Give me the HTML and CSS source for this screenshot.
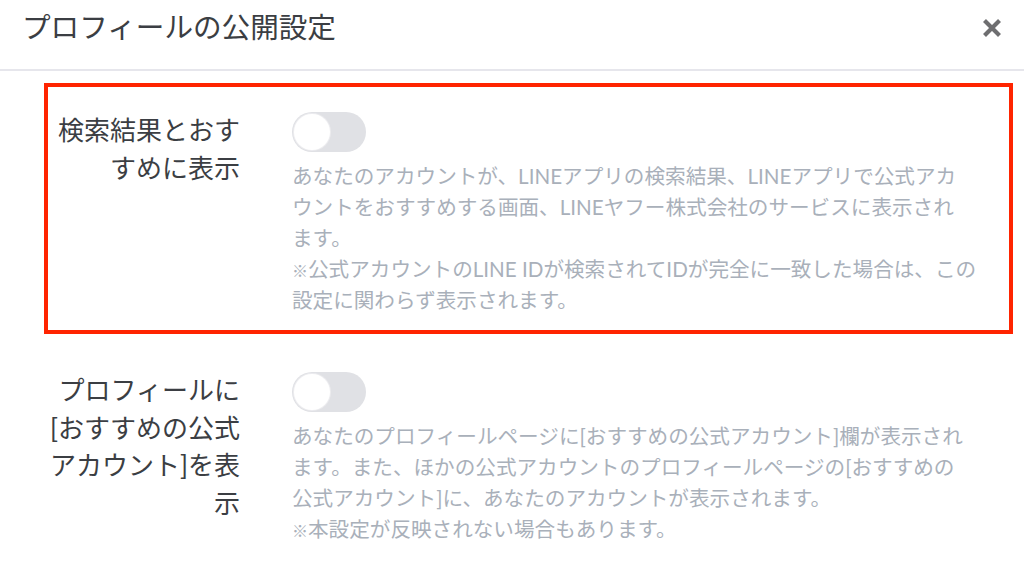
FILE: index.html
```html
<!DOCTYPE html>
<html lang="ja">
<head>
<meta charset="utf-8">
<title>プロフィールの公開設定</title>
<link rel="stylesheet" href="styles.css">
</head>
<body>
<div class="dialog">
  <header class="dialog-header">
    <h1 class="dialog-title">プロフィールの公開設定</h1>
    <button class="close-btn" aria-label="閉じる">
      <svg width="20" height="20" viewBox="0 0 20 20"><path d="M2.5 2.5 L17.5 17.5 M17.5 2.5 L2.5 17.5" stroke="#6e6e70" stroke-width="4.2" stroke-linecap="butt" fill="none"/></svg>
    </button>
  </header>
  <main class="settings">
    <section class="setting-row highlighted">
      <div class="setting-label">検索結果とおすすめに表示</div>
      <div class="setting-body">
        <div class="toggle"><span class="knob"></span></div>
        <p class="setting-desc">あなたのアカウントが、LINEアプリの検索結果、LINEアプリで公式アカウントをおすすめする画面、LINEヤフー株式会社のサービスに表示されます。</p>
        <p class="setting-note"><span class="note-mark">※</span>公式アカウントのLINE IDが検索されてIDが完全に一致した場合は、この設定に関わらず表示されます。</p>
      </div>
    </section>
    <section class="setting-row">
      <div class="setting-label">プロフィールに[おすすめの公式アカウント]を表示</div>
      <div class="setting-body">
        <div class="toggle"><span class="knob"></span></div>
        <p class="setting-desc">あなたのプロフィールページに[おすすめの公式アカウント]欄が表示されます。また、ほかの公式アカウントのプロフィールページの[おすすめの公式アカウント]に、あなたのアカウントが表示されます。</p>
        <p class="setting-note"><span class="note-mark">※</span>本設定が反映されない場合もあります。</p>
      </div>
    </section>
  </main>
</div>
</body>
</html>
```
FILE: styles.css
```css
* { box-sizing: border-box; }
html, body { margin: 0; padding: 0; background: #ffffff; }
body {
  font-family: "Lato", "Noto Sans CJK JP", sans-serif;
  color: #3b3e43;
  overflow: hidden;
}
.dialog { width: 1024px; height: 581px; }
.dialog-header {
  height: 71px;
  display: flex;
  align-items: flex-start;
  justify-content: space-between;
  padding: 7px 22px 0 22px;
  border-bottom: 2px solid #e6e6ec;
}
.dialog-title {
  margin: 0;
  font-size: 28.6px;
  font-weight: 400;
  line-height: 40px;
  color: #3b3e43;
}
.close-btn {
  margin-top: 11px;
  width: 20px;
  height: 20px;
  padding: 0;
  border: 0;
  background: none;
  display: flex;
}
.settings {
  padding: 12px 11px 0 44px;
  display: flex;
  flex-direction: column;
  gap: 9px;
}
.setting-row {
  display: flex;
  border: 4px solid transparent;
  padding: 25px 0 14px 0;
}
.setting-row.highlighted { border-color: #ff2400; }
.setting-label {
  width: 192px;
  flex: none;
  text-align: right;
  font-size: 26px;
  line-height: 37.5px;
  color: #3b3e43;
}
.setting-body {
  margin-left: 52px;
  display: flex;
  flex-direction: column;
  align-items: flex-start;
}
.toggle {
  width: 74px;
  height: 40px;
  border-radius: 20px;
  background: #e0e1e5;
  padding: 2px;
}
.knob {
  display: block;
  width: 36px;
  height: 36px;
  border-radius: 50%;
  background: #ffffff;
  box-shadow: 0 0 0 1px #ececef;
}
.setting-desc,
.setting-note {
  margin: 0;
  font-size: 20.6px;
  line-height: 31px;
  color: #a9b0ba;
}
.setting-desc {
  margin-top: 9px;
  width: 680px;
}
.setting-note {
  width: 692px;
}
.note-mark {
  font-size: 16px;
  line-height: 1;
}
```
